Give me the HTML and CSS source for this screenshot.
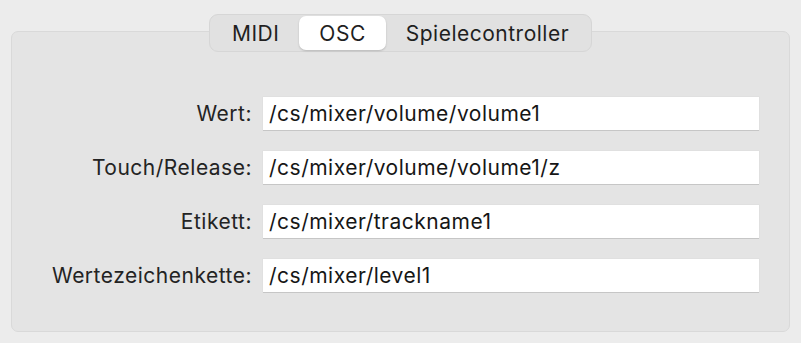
FILE: index.html
```html
<!DOCTYPE html>
<html lang="de">
<head>
  <meta charset="UTF-8" />
  <title>OSC</title>
  <link rel="stylesheet" href="styles.css">
</head>
<body>
  <div class="tabs">
    <button class="tab">MIDI</button>
    <button class="tab active">OSC</button>
    <button class="tab">Spielecontroller</button>
  </div>

  <div class="panel">
    <div class="form">
      <label>Wert:</label>
      <div class="field">/cs/mixer/volume/volume1</div>

      <label>Touch/Release:</label>
      <div class="field">/cs/mixer/volume/volume1/z</div>

      <label>Etikett:</label>
      <div class="field">/cs/mixer/trackname1</div>

      <label>Wertezeichenkette:</label>
      <div class="field">/cs/mixer/level1</div>
    </div>
  </div>
</body>
</html>
```

FILE: styles.css
```css
body, html {
  margin: 0;
  padding: 0;
  background: #ececec;
  font-family: Inter, "Liberation Sans", sans-serif;
  font-size: 21px;
  letter-spacing: 0.5px;
  color: #232323;
}
body {
  padding: 14px 11px 0;
}
.tabs {
  position: relative;
  z-index: 2;
  display: flex;
  width: max-content;
  margin: 0 auto -21px;
  padding: 1px 2px;
  height: 34px;
  background: #e1e1e1;
  border: 1px solid #d6d6d6;
  border-radius: 9px;
}
.tab {
  font: inherit;
  letter-spacing: inherit;
  color: #1f1f1f;
  background: none;
  border: none;
  padding: 0 20px;
  border-radius: 7px;
  cursor: pointer;
}
.tab.active {
  background: #fff;
  box-shadow: 0 1px 2px rgba(0, 0, 0, 0.18);
}
.panel {
  height: 301px;
  box-sizing: border-box;
  background: #e4e4e4;
  border: 1px solid #d9d9d9;
  border-radius: 7px;
  padding: 65px 30px 0 0;
}
.form {
  display: grid;
  grid-template-columns: 1fr 496px;
  column-gap: 11px;
  row-gap: 21px;
  align-items: center;
}
.form label {
  text-align: right;
}
.field {
  height: 33px;
  box-sizing: border-box;
  background: #fff;
  color: #161616;
  padding: 0 6px;
  line-height: 33px;
  box-shadow: 0 1px 0 #c6c6c6, 0 0 0 0.5px #dcdcdc;
}
```
